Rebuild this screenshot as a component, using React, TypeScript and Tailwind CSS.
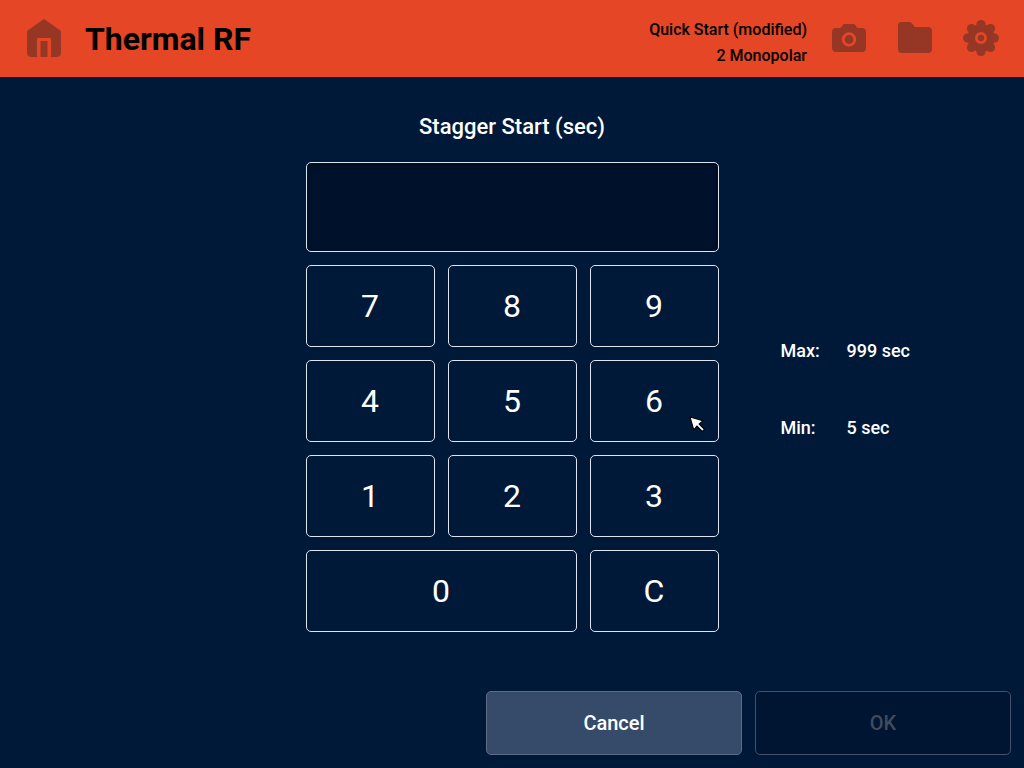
import { useState } from "react";

const iconButton = "flex size-9 items-center justify-center text-[#963624]";
const keyClass =
  "relative h-[82px] rounded-[5px] border border-[#dfe4ee] text-[32px] leading-10 text-white";

function HomeIcon() {
  return (
    <svg viewBox="0 0 36 40" className="h-10 w-9 shrink-0" aria-hidden="true">
      <path
        d="M18 1 34.3 12.6Q35 13.1 35 14V34.5Q35 39 30.5 39H25V21.3Q25 20 23.7 20H12.3Q11 20 11 21.3V39H5.5Q1 39 1 34.5V14Q1 13.1 1.7 12.6ZM14.5 23H21.5V39H14.5Z"
        fill="currentColor"
      />
    </svg>
  );
}

function CameraIcon() {
  return (
    <svg viewBox="0 0 36 36" className="size-9" aria-hidden="true">
      <path
        fillRule="evenodd"
        d="M13.5 4H22.5Q23.6 4 24.2 5L25.8 7.3Q26.3 8 27.2 8H31Q35 8 35 12V28Q35 32 31 32H5Q1 32 1 28V12Q1 8 5 8H8.8Q9.7 8 10.2 7.3L11.8 5Q12.4 4 13.5 4ZM18 12.3a7.2 7.2 0 1 0 0 14.4a7.2 7.2 0 1 0 0-14.4Z"
        fill="currentColor"
      />
      <circle cx="18" cy="19.5" r="4.4" fill="currentColor" />
    </svg>
  );
}

function FolderIcon() {
  return (
    <svg viewBox="0 0 36 36" className="size-9" aria-hidden="true">
      <path
        d="M4.5 2H12.5Q14.3 2 15.2 3.5L16.5 5.6Q17.3 7 19 7H31Q35 7 35 11V29Q35 33 31 33H5Q1 33 1 29V5.5Q1 2 4.5 2Z"
        fill="currentColor"
      />
    </svg>
  );
}

function GearIcon() {
  return (
    <svg viewBox="0 0 36 36" className="size-9" aria-hidden="true">
      <g fill="currentColor">
        <circle cx="18" cy="18" r="13.7" />
        <circle cx="18" cy="4.6" r="4.6" />
        <circle cx="27.5" cy="8.5" r="4.6" />
        <circle cx="31.4" cy="18" r="4.6" />
        <circle cx="27.5" cy="27.5" r="4.6" />
        <circle cx="18" cy="31.4" r="4.6" />
        <circle cx="8.5" cy="27.5" r="4.6" />
        <circle cx="4.6" cy="18" r="4.6" />
        <circle cx="8.5" cy="8.5" r="4.6" />
      </g>
      <circle cx="18" cy="18" r="4.6" fill="none" stroke="#e54626" strokeWidth="2.8" />
    </svg>
  );
}

function Pointer() {
  return (
    <svg
      viewBox="0 0 16 16"
      className="pointer-events-none absolute right-3 bottom-2 size-[17px]"
      aria-hidden="true"
    >
      <path
        d="M1 1 13 4.5 9.5 7.5 14.5 12.5 12.5 14.5 7.5 9.5 4.5 13Z"
        fill="#fff"
        stroke="#000"
        strokeWidth="1"
      />
    </svg>
  );
}

export default function App() {
  const [value, setValue] = useState("");
  const press = (digit: string) => setValue((v) => (v + digit).slice(0, 3));
  const valid = Number(value) >= 5;

  return (
    <div className="flex min-h-screen flex-col bg-[#001939] font-['Roboto',sans-serif] text-white">
      <header className="flex h-[77px] items-center bg-[#e54626] pr-[25px] pb-0.5 pl-[26px] text-black">
        <button type="button" aria-label="Home" className={iconButton}>
          <HomeIcon />
        </button>
        <h1 className="ml-[23px] pt-0.5 text-[32px] leading-10 font-bold">Thermal RF</h1>
        <div className="mr-6 ml-auto pt-2.5 text-right text-[16px] leading-[26px] font-medium">
          <p>Quick Start (modified)</p>
          <p>2 Monopolar</p>
        </div>
        <nav className="flex gap-[30px]" aria-label="Tools">
          <button type="button" aria-label="Camera" className={iconButton}>
            <CameraIcon />
          </button>
          <button type="button" aria-label="Files" className={iconButton}>
            <FolderIcon />
          </button>
          <button type="button" aria-label="Settings" className={iconButton}>
            <GearIcon />
          </button>
        </nav>
      </header>

      <main className="grid grid-cols-[1fr_413px_1fr] items-center pt-8">
        <section className="col-start-2">
          <label htmlFor="stagger" className="block text-center text-[22px] leading-9 font-medium">
            Stagger Start (sec)
          </label>
          <input
            id="stagger"
            type="text"
            readOnly
            value={value}
            className="mt-[17px] block h-[90px] w-full rounded-[5px] border border-[#dfe4ee] bg-[#00112b] text-center text-[32px] shadow-[inset_-2px_2px_4px_#000c20] outline-none"
          />
          <div className="mt-[13px] grid grid-cols-3 gap-[13px]">
            {["7", "8", "9", "4", "5", "6", "1", "2", "3"].map((digit) => (
              <button key={digit} type="button" onClick={() => press(digit)} className={keyClass}>
                {digit}
                {digit === "6" && <Pointer />}
              </button>
            ))}
            <button type="button" onClick={() => press("0")} className={`col-span-2 ${keyClass}`}>
              0
            </button>
            <button type="button" onClick={() => setValue("")} className={keyClass}>
              C
            </button>
          </div>
        </section>
        <dl className="grid grid-cols-[66px_auto] justify-start gap-y-[53px] pt-[37px] pl-[62px] text-[18px] leading-6 font-medium">
          <dt>Max:</dt>
          <dd>999 sec</dd>
          <dt>Min:</dt>
          <dd>5 sec</dd>
        </dl>
      </main>

      <footer className="mt-auto flex justify-end gap-[13px] p-[13px] text-[20px] font-medium">
        <button
          type="button"
          onClick={() => setValue("")}
          className="h-16 w-64 rounded-[5px] border border-[#5d6d87] bg-[#364a69]"
        >
          Cancel
        </button>
        <button
          type="button"
          disabled={!valid}
          className="h-16 w-64 rounded-[5px] border border-[#dfe4ee] disabled:border-[#43516a] disabled:bg-[#001532] disabled:text-[#404b5b]"
        >
          OK
        </button>
      </footer>
    </div>
  );
}
